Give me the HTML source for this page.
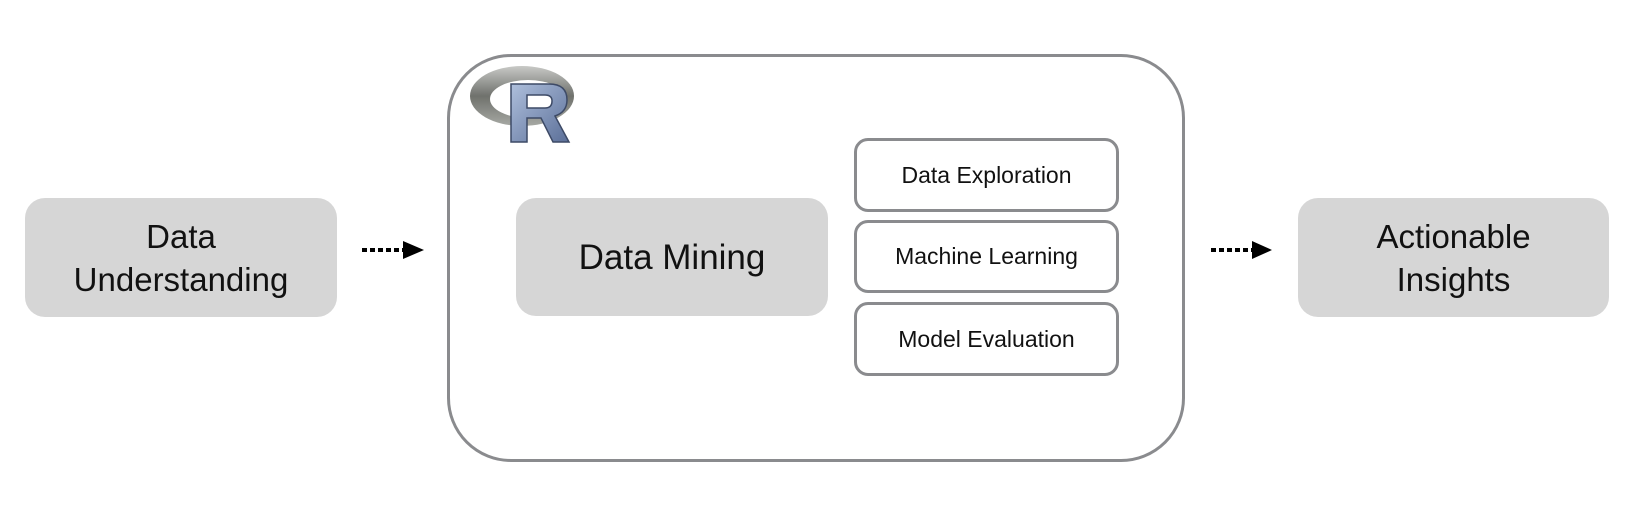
<!DOCTYPE html>
<html><head><style>
body{margin:0;width:1638px;height:510px;background:#fff;position:relative;overflow:hidden;font-family:"Liberation Sans",sans-serif;color:#111}
.g{position:absolute;background:#d6d6d6;border-radius:20px;display:flex;align-items:center;justify-content:center;text-align:center;font-size:33px;line-height:43px}
.o{position:absolute;border:3px solid #8a8b8e;border-radius:64px;box-sizing:border-box}
.s{position:absolute;border:3px solid #8a8b8e;border-radius:14px;box-sizing:border-box;display:flex;align-items:center;justify-content:center;font-size:23px;left:854px;width:265px}
</style></head><body>
<div class="g" style="left:25px;top:198px;width:312px;height:119px">Data<br>Understanding</div>
<svg style="position:absolute;left:0;top:0" width="1638" height="510">
<line x1="362" y1="250" x2="405" y2="250" stroke="#000" stroke-width="4" stroke-dasharray="5,3"/>
<polygon points="403,241 424,250 403,259" fill="#000"/>
<line x1="1211" y1="250" x2="1254" y2="250" stroke="#000" stroke-width="4" stroke-dasharray="5,3"/>
<polygon points="1252,241 1272,250 1252,259" fill="#000"/>
</svg>
<div class="o" style="left:447px;top:54px;width:738px;height:408px"></div>
<svg style="position:absolute;left:465px;top:62px" width="120" height="85">
<defs><linearGradient id="r" x1="0" y1="0" x2="0" y2="1"><stop offset="0" stop-color="#c8c9c6"/><stop offset=".5" stop-color="#6f716c"/><stop offset="1" stop-color="#a7a9a4"/></linearGradient>
<linearGradient id="b" x1="0" y1="0" x2="1" y2="1"><stop offset="0" stop-color="#aebfdc"/><stop offset="1" stop-color="#5b6f98"/></linearGradient></defs>
<ellipse cx="57" cy="34" rx="52" ry="30" fill="url(#r)"/>
<ellipse cx="63" cy="37" rx="38" ry="19" fill="#fff"/>
<path d="M46 22 H84 Q102 22 102 38 Q102 50 90 54 L104 80 H88 L76 56 H62 V80 H46 Z M62 33 V46 H80 Q87 46 87 39 Q87 33 80 33 Z" fill="url(#b)" stroke="#3d4a66" stroke-width="1.5"/>
</svg>
<div class="g" style="left:516px;top:198px;width:312px;height:118px;font-size:35px">Data Mining</div>
<div class="s" style="top:138px;height:74px">Data Exploration</div>
<div class="s" style="top:220px;height:73px">Machine Learning</div>
<div class="s" style="top:302px;height:74px">Model Evaluation</div>
<div class="g" style="left:1298px;top:198px;width:311px;height:119px">Actionable<br>Insights</div>
</body></html>
